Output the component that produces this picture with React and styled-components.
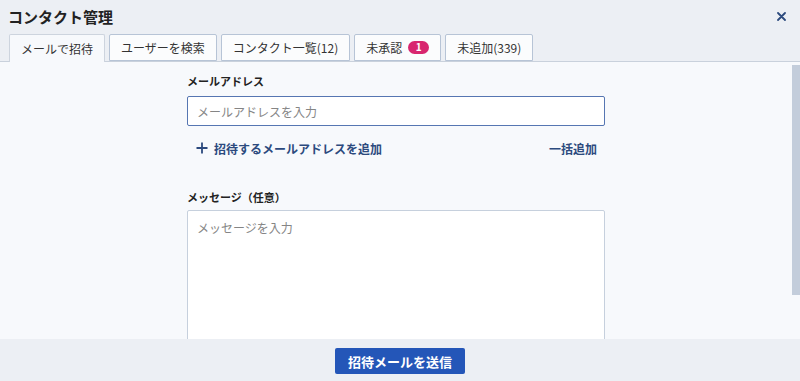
import React, { useState } from "react";
import styled, { createGlobalStyle } from "styled-components";

const GlobalStyle = createGlobalStyle`
  html, body {
    margin: 0;
    padding: 0;
    background: #eceff4;
  }
  body {
    font-family: "Noto Sans CJK JP", "Noto Sans", sans-serif;
    color: #222;
  }
  * {
    box-sizing: border-box;
  }
`;

const tabs = [
  { key: "invite", label: "メールで招待" },
  { key: "search", label: "ユーザーを検索" },
  { key: "list", label: "コンタクト一覧(12)" },
  { key: "pending", label: "未承認", badge: 1 },
  { key: "notadded", label: "未追加(339)" },
];

function App() {
  const [active, setActive] = useState("invite");

  return (
    <>
      <GlobalStyle />
      <Modal>
        <Header>
          <Title>コンタクト管理</Title>
          <CloseButton aria-label="閉じる">
            <svg width="9" height="9" viewBox="0 0 9 9">
              <path
                d="M1 1 L8 8 M8 1 L1 8"
                stroke="#2c4a7e"
                strokeWidth="1.8"
                strokeLinecap="round"
              />
            </svg>
          </CloseButton>
        </Header>

        <TabBar>
          {tabs.map((t) => (
            <Tab
              key={t.key}
              $active={active === t.key}
              onClick={() => setActive(t.key)}
            >
              {t.label}
              {t.badge && <Badge>{t.badge}</Badge>}
            </Tab>
          ))}
        </TabBar>

        <Body>
          <Form>
            <Label>メールアドレス</Label>
            <TextInput placeholder="メールアドレスを入力" />
            <ActionRow>
              <LinkButton>
                <svg width="12" height="12" viewBox="0 0 12 12">
                  <path
                    d="M6 0.5 V11.5 M0.5 6 H11.5"
                    stroke="#2c4a7e"
                    strokeWidth="1.8"
                  />
                </svg>
                招待するメールアドレスを追加
              </LinkButton>
              <LinkButton>一括追加</LinkButton>
            </ActionRow>

            <Label $top={31}>メッセージ（任意）</Label>
            <TextArea placeholder="メッセージを入力" />
          </Form>
          {/* overlay scrollbar thumb */}
          <ScrollThumb />
        </Body>

        <Footer>
          <PrimaryButton>招待メールを送信</PrimaryButton>
        </Footer>
      </Modal>
    </>
  );
}

export default App;

const Modal = styled.div`
  width: 800px;
  height: 381px;
  display: flex;
  flex-direction: column;
  background: #eceff4;
  overflow: hidden;
`;

const Header = styled.div`
  height: 34px;
  display: flex;
  align-items: center;
  justify-content: space-between;
  padding: 0 14px 2px 8px;
`;

const Title = styled.h1`
  margin: 0;
  font-size: 15px;
  font-weight: 700;
  color: #222;
`;

const CloseButton = styled.button`
  border: none;
  background: none;
  padding: 0;
  display: flex;
  cursor: pointer;
`;

const TabBar = styled.div`
  display: flex;
  gap: 4px;
  padding-left: 9px;
  height: 28px;
  border-bottom: 1px solid #c9d1dc;
`;

const Tab = styled.button`
  display: flex;
  align-items: center;
  gap: 6px;
  height: ${(p) => (p.$active ? "28px" : "27px")};
  padding: 0 11px 1px;
  font-family: inherit;
  font-size: 12px;
  color: #333;
  background: ${(p) => (p.$active ? "#f7f9fc" : "#fbfcfd")};
  border: 1px solid ${(p) => (p.$active ? "#cdd4de" : "#b7c4d6")};
  border-bottom: ${(p) => (p.$active ? "none" : "1px solid #b7c4d6")};
  border-radius: 2px 2px 0 0;
  cursor: pointer;
  white-space: nowrap;
`;

const Badge = styled.span`
  display: inline-flex;
  align-items: center;
  justify-content: center;
  min-width: 21px;
  height: 13px;
  padding: 0 6px;
  border-radius: 7px;
  background: #d8266f;
  color: #fff;
  font-size: 10px;
  font-weight: 700;
  line-height: 1;
`;

const Body = styled.div`
  position: relative;
  flex: 1;
  padding-right: 8px;
  background: #f7f9fc;
  overflow: hidden;
`;

const ScrollThumb = styled.div`
  position: absolute;
  top: 3px;
  right: 0;
  width: 8px;
  height: 230px;
  background: #c3cddb;
`;

const Form = styled.div`
  width: 418px;
  margin: 0 auto;
  padding: 11px 0 46px;
  display: flex;
  flex-direction: column;
`;

const Label = styled.label`
  margin-top: ${(p) => p.$top || 0}px;
  font-size: 11px;
  font-weight: 700;
  line-height: 16px;
  color: #222;
`;

const TextInput = styled.input`
  margin-top: 7px;
  height: 30px;
  padding: 0 9px;
  font-family: inherit;
  font-size: 12px;
  color: #333;
  background: #fff;
  border: 1px solid #5676b2;
  border-radius: 2px;
  outline: none;

  &::placeholder {
    color: #858585;
  }
`;

const ActionRow = styled.div`
  margin-top: 12px;
  height: 20px;
  display: flex;
  align-items: center;
  justify-content: space-between;
  padding: 0 8px 0 9px;
`;

const LinkButton = styled.button`
  display: flex;
  align-items: center;
  gap: 6px;
  border: none;
  background: none;
  padding: 0;
  font-family: inherit;
  font-size: 12px;
  font-weight: 700;
  color: #2c4a7e;
  cursor: pointer;
`;

const TextArea = styled.textarea`
  margin-top: 5px;
  height: 140px;
  padding: 8px 9px;
  font-family: inherit;
  font-size: 12px;
  line-height: 18px;
  color: #333;
  background: #fff;
  border: 1px solid #c6d0dd;
  border-radius: 2px;
  resize: none;
  outline: none;

  &::placeholder {
    color: #858585;
  }
`;

const Footer = styled.div`
  height: 42px;
  flex-shrink: 0;
  display: flex;
  justify-content: center;
  align-items: flex-start;
  padding-top: 9px;
  background: #eceff4;
`;

const PrimaryButton = styled.button`
  width: 130px;
  height: 26px;
  border: none;
  border-radius: 2px;
  background: #2456b8;
  color: #fff;
  font-family: inherit;
  font-size: 13px;
  font-weight: 700;
  cursor: pointer;
`;
